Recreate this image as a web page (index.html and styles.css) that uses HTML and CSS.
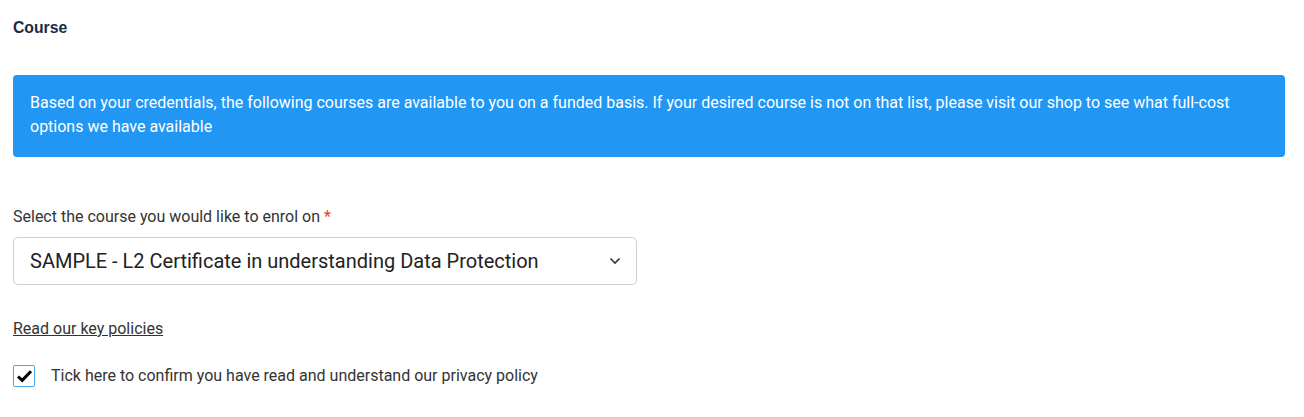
FILE: index.html
```html
<!DOCTYPE html>
<html lang="en">
<head>
  <meta charset="UTF-8">
  <title>Course</title>
  <link rel="stylesheet" href="styles.css">
</head>
<body>

  <div class="section">
    <h3 class="section-title">Course</h3>

    <div class="info-box">
      Based on your credentials, the following courses are available to you on a funded basis. If your desired course is not on that list, please visit our shop to see what full-cost options we have available
    </div>

    <!-- Course select -->
    <div class="field">
      <label for="course">Select the course you would like to enrol on <span class="required">*</span></label>
      <div class="select-wrap">
        <select id="course" name="course">
          <option>SAMPLE - L2 Certificate in understanding Data Protection</option>
        </select>
        <svg class="chevron" width="12" height="8" viewBox="0 0 12 8">
          <path d="M1.5 1.5 L6 6 L10.5 1.5" fill="none" stroke="#333" stroke-width="1.6"/>
        </svg>
      </div>
    </div>

    <a href="#" class="policy-link">Read our key policies</a>

    <label class="check-row">
      <span class="check-box">
        <svg width="17" height="14" viewBox="0 0 17 14">
          <path d="M2 7.5 L6.2 11.3 L15 2.3" fill="none" stroke="#000" stroke-width="3"/>
        </svg>
      </span>
      Tick here to confirm you have read and understand our privacy policy
    </label>
  </div>

</body>
</html>
```

FILE: styles.css
```css
body {
  font-family: Roboto, 'Liberation Sans', sans-serif;
  background-color: white;
  color: #333;
  margin: 0;
  padding: 0;
}

.section {
  padding: 19px 19px 0 13px;
}

.section-title {
  margin: 0;
  font-family: 'Liberation Sans', Arial, sans-serif;
  font-size: 15.75px;
  font-weight: bold;
  color: #1c2b45;
  line-height: 18px;
}

.info-box {
  margin-top: 38px;
  background-color: #2196f3;
  color: white;
  border-radius: 4px;
  padding: 16px 17px 18px 17px;
  font-size: 16px;
  line-height: 24px;
}

.field {
  margin-top: 50px;
}

.field label {
  display: block;
  font-size: 16px;
  line-height: 20px;
  color: #333;
}

.required {
  color: #e4452f;
}

.select-wrap {
  position: relative;
  width: 624px;
  margin-top: 10px;
}

.select-wrap select {
  appearance: none;
  -webkit-appearance: none;
  width: 100%;
  height: 48px;
  border: 1px solid #cfcfcf;
  border-radius: 5px;
  background-color: white;
  padding: 0 16px;
  font-family: Roboto, 'Liberation Sans', sans-serif;
  font-size: 20px;
  color: #222;
}

.chevron {
  position: absolute;
  right: 16px;
  top: 20px;
  pointer-events: none;
}

.policy-link {
  display: inline-block;
  margin-top: 34px;
  font-size: 16px;
  line-height: 20px;
  color: #333;
  text-decoration: underline;
}

.check-row {
  display: flex;
  align-items: center;
  gap: 16px;
  margin-top: 26px;
  font-size: 16px;
  line-height: 20px;
  color: #333;
}

.check-box {
  width: 20px;
  height: 20px;
  border: 1px solid #4aa8e0;
  border-radius: 2px;
  display: flex;
  align-items: center;
  justify-content: center;
}
```
